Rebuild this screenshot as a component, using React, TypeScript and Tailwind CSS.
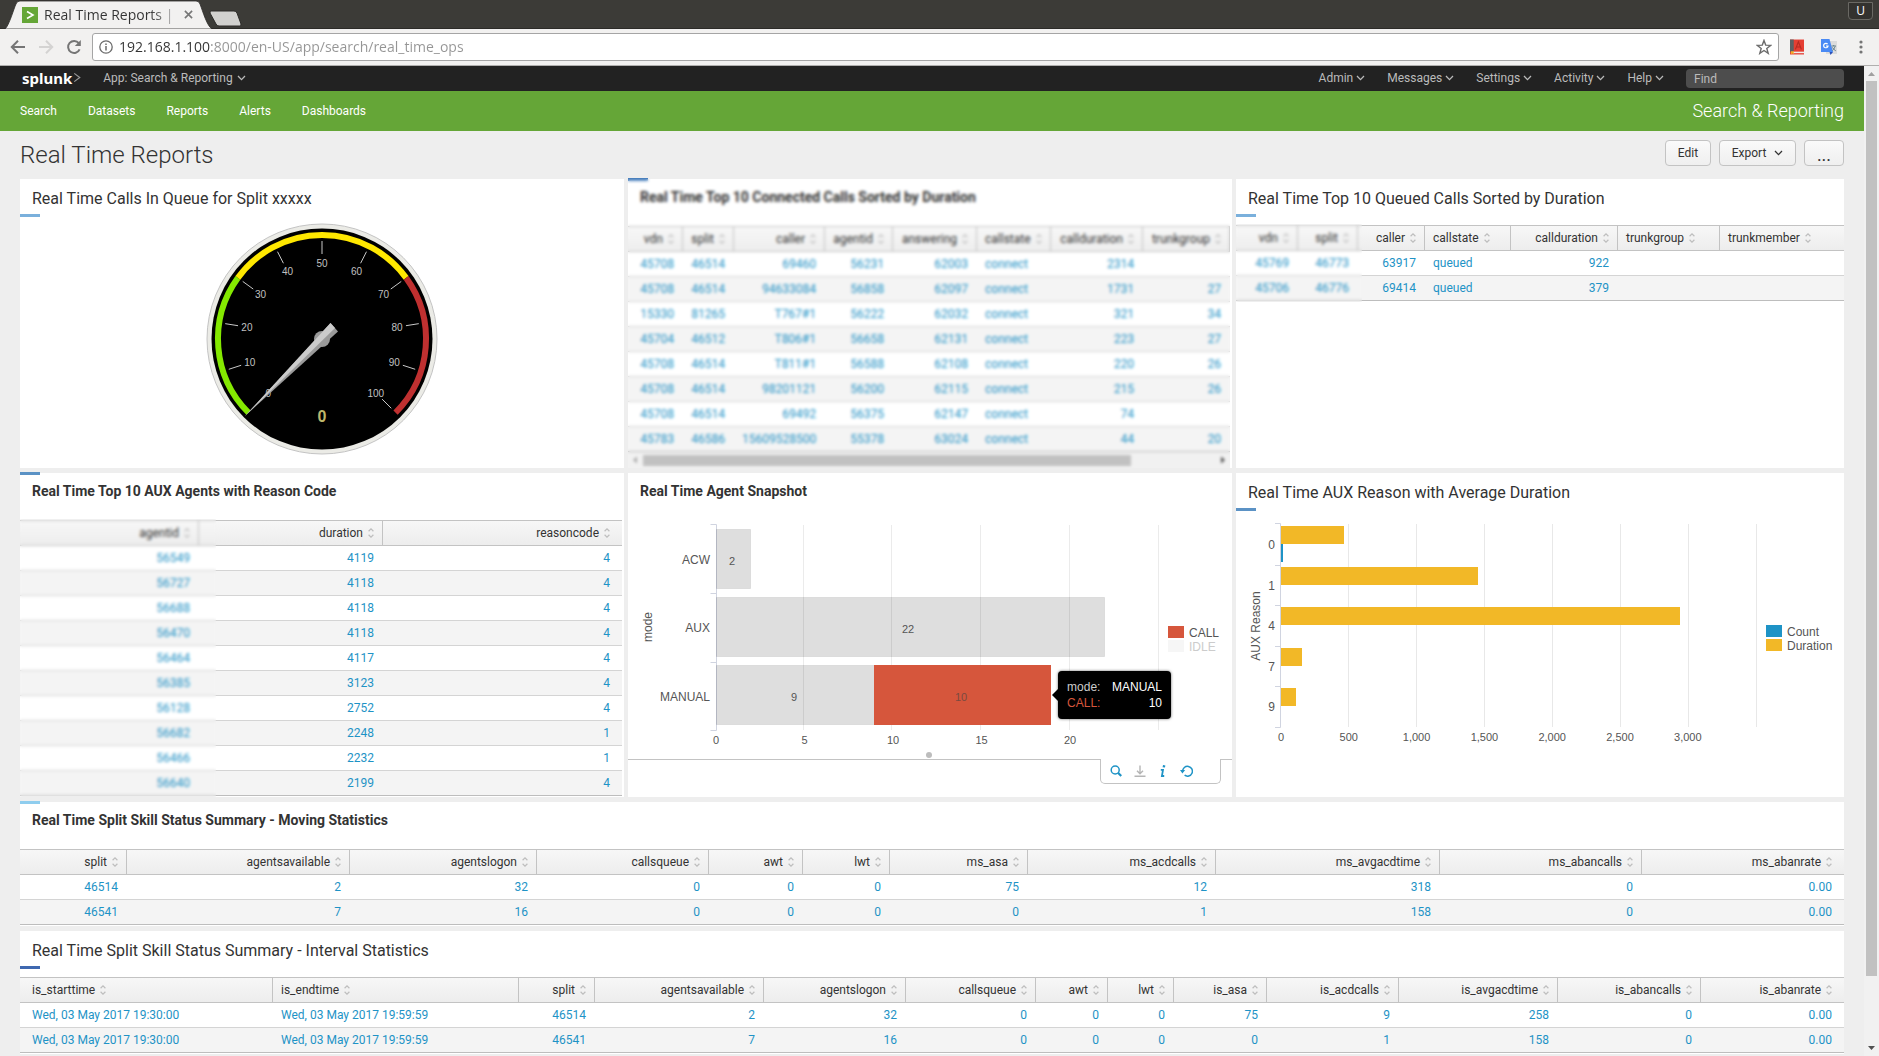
import type { ReactNode } from "react";

type Col = { name: string; w: string; left?: boolean };

const connectedCols: Col[] = [
  { name: "vdn", w: "w-[55px]" },
  { name: "split", w: "w-[51px]" },
  { name: "caller", w: "w-[91px]" },
  { name: "agentid", w: "w-[68px]" },
  { name: "answering", w: "w-[84px]" },
  { name: "callstate", w: "w-[74px]", left: true },
  { name: "callduration", w: "w-[92px]" },
  { name: "trunkgroup", w: "w-[87px]" },
];
const connectedRows = [
  ["45708", "46514", "69460", "56231", "62003", "connect", "2314", ""],
  ["45708", "46514", "94633084", "56858", "62097", "connect", "1731", "27"],
  ["15330", "81265", "T767#1", "56222", "62032", "connect", "321", "34"],
  ["45704", "46512", "T806#1", "56658", "62131", "connect", "223", "27"],
  ["45708", "46514", "T811#1", "56588", "62108", "connect", "220", "26"],
  ["45708", "46514", "98201121", "56200", "62115", "connect", "215", "26"],
  ["45708", "46514", "69492", "56375", "62147", "connect", "74", ""],
  ["45783", "46586", "15609528500", "55378", "63024", "connect", "44", "20"],
];

const queuedCols: Col[] = [
  { name: "vdn", w: "w-[62px]" },
  { name: "split", w: "w-[60px]" },
  { name: "caller", w: "w-[67px]" },
  { name: "callstate", w: "w-[86px]", left: true },
  { name: "callduration", w: "w-[107px]" },
  { name: "trunkgroup", w: "w-[102px]", left: true },
  { name: "trunkmember", w: "w-[124px]", left: true },
];
const queuedRows = [
  ["45769", "46773", "63917", "queued", "922", "", ""],
  ["45706", "46776", "69414", "queued", "379", "", ""],
];

const auxCols: Col[] = [
  { name: "agentid", w: "w-[179px]" },
  { name: "duration", w: "w-[184px]" },
  { name: "reasoncode", w: "w-[239px]" },
];
const auxRows = [
  ["56549", "4119", "4"],
  ["56727", "4118", "4"],
  ["56688", "4118", "4"],
  ["56470", "4118", "4"],
  ["56464", "4117", "4"],
  ["56385", "3123", "4"],
  ["56128", "2752", "4"],
  ["56682", "2248", "1"],
  ["56466", "2232", "1"],
  ["56640", "2199", "4"],
];

const movingCols: Col[] = [
  { name: "split", w: "w-[107px]" },
  { name: "agentsavailable", w: "w-[223px]" },
  { name: "agentslogon", w: "w-[187px]" },
  { name: "callsqueue", w: "w-[172px]" },
  { name: "awt", w: "w-[94px]" },
  { name: "lwt", w: "w-[87px]" },
  { name: "ms_asa", w: "w-[138px]" },
  { name: "ms_acdcalls", w: "w-[188px]" },
  { name: "ms_avgacdtime", w: "w-[224px]" },
  { name: "ms_abancalls", w: "w-[202px]" },
  { name: "ms_abanrate", w: "w-[202px]" },
];
const movingRows = [
  ["46514", "2", "32", "0", "0", "0", "75", "12", "318", "0", "0.00"],
  ["46541", "7", "16", "0", "0", "0", "0", "1", "158", "0", "0.00"],
];

const intervalCols: Col[] = [
  { name: "is_starttime", w: "w-[253px]", left: true },
  { name: "is_endtime", w: "w-[246px]", left: true },
  { name: "split", w: "w-[76px]" },
  { name: "agentsavailable", w: "w-[169px]" },
  { name: "agentslogon", w: "w-[142px]" },
  { name: "callsqueue", w: "w-[130px]" },
  { name: "awt", w: "w-[72px]" },
  { name: "lwt", w: "w-[66px]" },
  { name: "is_asa", w: "w-[93px]" },
  { name: "is_acdcalls", w: "w-[132px]" },
  { name: "is_avgacdtime", w: "w-[159px]" },
  { name: "is_abancalls", w: "w-[143px]" },
  { name: "is_abanrate", w: "w-[143px]" },
];
const intervalRows = [
  ["Wed, 03 May 2017 19:30:00", "Wed, 03 May 2017 19:59:59", "46514", "2", "32", "0", "0", "0", "75", "9", "258", "0", "0.00"],
  ["Wed, 03 May 2017 19:30:00", "Wed, 03 May 2017 19:59:59", "46541", "7", "16", "0", "0", "0", "0", "1", "158", "0", "0.00"],
];

function SortIcon() {
  return (
    <svg viewBox="0 0 6 10" className="h-[10px] w-[6px] shrink-0" fill="none" stroke="#bdbdbd" strokeWidth="1.2" aria-hidden="true">
      <path d="M0.6 3.2 L3 0.9 L5.4 3.2 M0.6 6.8 L3 9.1 L5.4 6.8" />
    </svg>
  );
}

function Chevron({ className = "" }: { className?: string }) {
  return (
    <svg viewBox="0 0 9 6" className={`h-[6px] w-[9px] shrink-0 ${className}`} fill="none" stroke="currentColor" strokeWidth="1.3" aria-hidden="true">
      <path d="M1 1 L4.5 4.6 L8 1" />
    </svg>
  );
}

function DataTable({ label, cols, rows, closed }: { label: string; cols: Col[]; rows: string[][]; closed?: boolean }) {
  const last = cols.length - 1;
  return (
    <table aria-label={label} className="w-full table-fixed border-separate border-spacing-0 text-xs">
      <colgroup>
        {cols.map((c) => (
          <col key={c.name} className={c.w} />
        ))}
      </colgroup>
      <thead>
        <tr>
          {cols.map((c, i) => (
            <th
              key={c.name}
              className={`h-[26px] border-y border-[#c3c3c3] bg-linear-to-b from-[#f7f7f7] to-[#ededed] p-0 font-normal text-[#333] ${
                i === last && !closed ? "pr-3" : "border-r pr-2"
              } ${i === 0 ? "pl-3" : "pl-2"}`}
            >
              <button type="button" className={`flex w-full items-center gap-[5px] ${c.left ? "justify-start" : "justify-end"}`}>
                {c.name}
                <SortIcon />
              </button>
            </th>
          ))}
        </tr>
      </thead>
      <tbody>
        {rows.map((r, ri) => (
          <tr key={ri} className={ri % 2 ? "bg-[#f4f4f4]" : "bg-white"}>
            {r.map((v, i) => (
              <td
                key={i}
                className={`h-[25px] border-b p-0 ${ri === rows.length - 1 ? "border-[#bdbdbd]" : "border-[#d4d4d4]"} ${
                  i === last && !closed ? "pr-3" : "pr-[9px]"
                } ${i === 0 ? "pl-3" : "pl-2"} ${cols[i].left ? "text-left" : "text-right"}`}
              >
                {v && (
                  <a href="#" className="whitespace-nowrap text-[#1e93c6]">
                    {v}
                  </a>
                )}
              </td>
            ))}
          </tr>
        ))}
      </tbody>
    </table>
  );
}

/* Panel whose progress mark sits under the title. */
function Panel({ title, mark, children, className = "" }: { title: string; mark: string; children: ReactNode; className?: string }) {
  return (
    <section className={`relative min-w-0 bg-white ${className}`}>
      <h2 className="h-[35px] pt-2 pl-3 text-base leading-6 text-[#333]">{title}</h2>
      <div className={`mb-2 h-[3px] w-5 ${mark}`} />
      {children}
    </section>
  );
}

/* Panel with a bold title and its progress mark on the top edge. */
function BoldPanel({ title, mark, children, className = "" }: { title: string; mark?: string; children: ReactNode; className?: string }) {
  return (
    <section className={`relative min-w-0 bg-white ${className}`}>
      {mark && <div className={`absolute -top-px left-0 h-[3px] w-5 ${mark}`} />}
      <h2 className="h-[47px] pt-[6px] pl-3 text-sm leading-6 font-bold text-[#333]">{title}</h2>
      {children}
    </section>
  );
}

const polar = (r: number, value: number): [number, number] => {
  const a = ((-135 + value * 2.7) * Math.PI) / 180;
  return [116 + r * Math.sin(a), 116 - r * Math.cos(a)];
};
const arc = (from: number, to: number) => {
  const [x1, y1] = polar(104, from);
  const [x2, y2] = polar(104, to);
  return `M${x1} ${y1} A104 104 0 0 1 ${x2} ${y2}`;
};

function Gauge() {
  const marks = [0, 10, 20, 30, 40, 50, 60, 70, 80, 90, 100];
  return (
    <svg viewBox="0 0 232 232" className="mx-auto -mt-0.5 block size-[232px]" role="img" aria-label="Calls in queue: 0">
      <circle cx="116" cy="116" r="115" fill="#ebebe6" stroke="#c4c4c4" />
      <circle cx="116" cy="116" r="110.5" fill="#000" />
      <g fill="none" strokeWidth="6">
        <path d={arc(0, 30)} stroke="#84e900" />
        <path d={arc(30, 70)} stroke="#ffe800" />
        <path d={arc(70, 100)} stroke="#bf3030" />
      </g>
      {marks.map((m) => {
        const [x1, y1] = polar(98, m);
        const [x2, y2] = polar(85, m);
        const [tx, ty] = polar(76, m);
        return (
          <g key={m}>
            <line x1={x1} y1={y1} x2={x2} y2={y2} stroke="#c8c8c8" />
            <text x={tx} y={ty + 4} textAnchor="middle" fontSize="10" fill="#c0c0c0" fontFamily="'Liberation Sans', sans-serif">
              {m}
            </text>
          </g>
        );
      })}
      <text x="116" y="199" textAnchor="middle" fontSize="16" fontWeight="bold" fill="#bdb76b" fontFamily="'Liberation Sans', sans-serif">
        0
      </text>
      <circle cx="116" cy="116" r="8" fill="#999" />
      <path d="M38.5 193.5 L124.5 100 L132 108.5 Z" fill="#9a9a9a" />
      <path d="M38.5 193.5 L124.5 100 L129 105 Z" fill="#cbcbcb" />
    </svg>
  );
}

function SnapshotChart() {
  return (
    <svg viewBox="0 0 604 239" className="block w-full" fontFamily="'Liberation Sans', sans-serif" fontSize="12" fill="#555">
      <g stroke="#ebebeb">
        {[176, 264, 353, 442, 531].map((x) => (
          <line key={x} x1={x - 0.5} x2={x - 0.5} y1="5" y2="210" />
        ))}
      </g>
      <path d="M82.5 4.5 H88.5 V210.5 H82.5 M82.5 73.5 H88 M82.5 142.5 H88" fill="none" stroke="#d0d4e0" />
      <g fill="#000" fillOpacity="0.13" stroke="#000" strokeOpacity="0.08">
        <rect x="88.5" y="9.5" width="34" height="59" />
        <rect x="88.5" y="77.5" width="388" height="59" />
        <rect x="88.5" y="145.5" width="158" height="59" />
      </g>
      <rect x="246" y="145" width="177" height="60" fill="#d6563c" />
      <g textAnchor="end">
        <text x="82" y="44">ACW</text>
        <text x="82" y="112">AUX</text>
        <text x="82" y="181">MANUAL</text>
      </g>
      <g textAnchor="middle" fontSize="11">
        <text x="104" y="45">2</text>
        <text x="280" y="113">22</text>
        <text x="166" y="181">9</text>
        <text x="333" y="181" fill="#7a4a40">10</text>
        {[0, 5, 10, 15, 20].map((v, i) => (
          <text key={v} x={88 + i * 88.5} y="224">{v}</text>
        ))}
      </g>
      <text transform="translate(24 107) rotate(-90)" textAnchor="middle">mode</text>
      <rect x="540" y="106" width="16" height="12" fill="#d6563c" />
      <text x="561" y="117">CALL</text>
      <rect x="540" y="120" width="16" height="12" fill="#f6f6f6" />
      <text x="561" y="131" fill="#ccc">IDLE</text>
      <circle cx="301" cy="235" r="3" fill="#bdbdbd" />
    </svg>
  );
}

function AuxChart() {
  const bars = [
    { label: "0", y: 7, w: 63 },
    { label: "1", y: 48, w: 197 },
    { label: "4", y: 88, w: 399 },
    { label: "7", y: 129, w: 21 },
    { label: "9", y: 169, w: 15 },
  ];
  return (
    <svg viewBox="0 0 608 240" className="block w-full" fontFamily="'Liberation Sans', sans-serif" fontSize="12" fill="#555">
      <g stroke="#e8e8e8">
        {[112, 180, 248, 316, 384, 452, 520].map((x) => (
          <line key={x} x1={x + 0.5} x2={x + 0.5} y1="5" y2="208" />
        ))}
      </g>
      <path d="M39 4.5 H44.5 V208.5 H39 M39 46.5 H44 M39 86.5 H44 M39 127.5 H44 M39 167.5 H44" fill="none" stroke="#d0d4e0" />
      {bars.map((b) => (
        <g key={b.label}>
          <rect x="45" y={b.y} width={b.w} height="18" fill="#f2b827" />
          <text x="39" y={b.y + 23} textAnchor="end">{b.label}</text>
        </g>
      ))}
      <rect x="45" y="25" width="2" height="18" fill="#1e93c6" />
      <g textAnchor="middle" fontSize="11">
        {["0", "500", "1,000", "1,500", "2,000", "2,500", "3,000"].map((t, i) => (
          <text key={t} x={45 + i * 67.8} y="222">{t}</text>
        ))}
      </g>
      <text transform="translate(24 107) rotate(-90)" textAnchor="middle">AUX Reason</text>
      <rect x="530" y="106" width="16" height="12" fill="#1e93c6" />
      <text x="551" y="117">Count</text>
      <rect x="530" y="120" width="16" height="12" fill="#f2b827" />
      <text x="551" y="131">Duration</text>
    </svg>
  );
}

function BrowserChrome() {
  return (
    <header className="shrink-0 font-['Open_Sans',sans-serif]">
      <div className="flex h-[29px] items-start justify-between border-b border-[#2c2b28] bg-[#3c3b37]">
        <div className="flex">
          <div className="relative h-[29px] w-[214px]">
            <svg viewBox="0 0 214 29" className="absolute inset-0 h-[29px] w-[214px]" aria-hidden="true">
              <path d="M5 29 C9 26 14 8 16 4 Q17 1 20 1 H196 Q199 1 200 4 C203 12 207 26 212 29 Z" fill="#f2f1f0" stroke="#2c2b28" strokeWidth="0.8" />
            </svg>
            <div className="relative flex h-[29px] items-center pl-[22px]">
              <svg viewBox="0 0 16 16" className="size-4" aria-hidden="true">
                <rect width="16" height="16" fill="#65a637" />
                <path d="M5 4.5 L11 8 L5 11.5" fill="none" stroke="#fff" strokeWidth="1.6" />
              </svg>
              <span className="ml-[6px] w-[131px] overflow-hidden bg-linear-to-r from-[#333] from-80% to-[#bbb] bg-clip-text text-sm whitespace-nowrap text-transparent">
                Real Time Reports |
              </span>
              <button type="button" aria-label="Close tab" className="ml-[9px]">
                <svg viewBox="0 0 10 10" className="size-[9px]" stroke="#777" strokeWidth="1.8">
                  <path d="M1 1 L9 9 M9 1 L1 9" />
                </svg>
              </button>
            </div>
          </div>
          <button type="button" aria-label="New tab" className="-ml-[5px] pt-[7px]">
            <svg viewBox="0 0 34 17" className="block h-[17px] w-[34px]">
              <path d="M2 1 H25 Q27 1 28 3 L32 14 Q32 16 31 16 H10 Q8 16 7 14 L1 3 Q1 1 2 1 Z" fill="#d1d0ce" stroke="#2c2b28" />
            </svg>
          </button>
        </div>
        <button type="button" className="mt-0.5 mr-[6px] h-[18px] w-[25px] rounded-b border border-[#6a6964] bg-[#33322f] text-xs leading-4 text-white">
          U
        </button>
      </div>
      <div className="flex h-[37px] items-center border-b border-[#b0afae] bg-[#f2f1f0] text-[#757575]">
        <button type="button" aria-label="Back" className="ml-[10px]">
          <svg viewBox="0 0 16 16" className="size-4" fill="none" stroke="#757575" strokeWidth="2">
            <path d="M15 8 H2 M8 1.8 L1.8 8 L8 14.2" />
          </svg>
        </button>
        <button type="button" aria-label="Forward" className="ml-3">
          <svg viewBox="0 0 16 16" className="size-4" fill="none" stroke="#d4d3d2" strokeWidth="2">
            <path d="M1 8 H14 M8 1.8 L14.2 8 L8 14.2" />
          </svg>
        </button>
        <button type="button" aria-label="Reload" className="ml-3">
          <svg viewBox="0 0 16 16" className="size-4" fill="none" stroke="#757575" strokeWidth="2">
            <path d="M13.6 10.4 A6 6 0 1 1 12.8 4.2" />
            <path d="M14.8 1 V7 H8.8 Z" fill="#757575" stroke="none" />
          </svg>
        </button>
        <div className="ml-[10px] flex h-[28px] min-w-0 flex-1 items-center rounded-[3px] border border-[#a5a5a5] bg-white px-[6px]">
          <svg viewBox="0 0 14 14" className="size-[14px] shrink-0" fill="none" stroke="#6b6b6b" strokeWidth="1.3" aria-hidden="true">
            <circle cx="7" cy="7" r="6.2" />
            <path d="M7 6 V10.4 M7 3.4 V5" strokeWidth="1.5" />
          </svg>
          <input
            aria-label="Address"
            defaultValue="192.168.1.100:8000/en-US/app/search/real_time_ops"
            className="ml-[6px] min-w-0 flex-1 bg-linear-to-r from-[#333] from-[91px] to-[#959595] to-[91px] bg-clip-text text-sm text-transparent outline-none"
          />
          <button type="button" aria-label="Bookmark">
            <svg viewBox="0 0 16 16" className="size-4" fill="none" stroke="#6b6b6b" strokeWidth="1.4">
              <path d="M8 1.4 L9.7 6.1 L14.8 6.3 L10.8 9.4 L12.2 14.3 L8 11.5 L3.8 14.3 L5.2 9.4 L1.2 6.3 L6.3 6.1 Z" />
            </svg>
          </button>
        </div>
        <button type="button" aria-label="Dictionary" className="ml-[11px]">
          <svg viewBox="0 0 15 16" className="h-4 w-[14px]">
            <rect width="15" height="16" fill="#e53f33" />
            <rect width="4" height="13" fill="#5d6265" />
            <path d="M5.8 10.5 L9 2.5 L12.2 10.5 M7 8 H11" fill="none" stroke="#b52b22" strokeWidth="1.2" />
            <rect x="3" y="13" width="12" height="1.6" fill="#eee" />
            <path d="M1 12.5 H4 V16 L2.5 14.6 L1 16 Z" fill="#f5b324" />
          </svg>
        </button>
        <button type="button" aria-label="Translate" className="ml-[17px]">
          <svg viewBox="0 0 16 16" className="size-4">
            <rect x="5" y="2" width="11" height="13" fill="#dcdcdc" />
            <path d="M0 0 H8.5 L12 13 H0 Z" fill="#4a8af4" />
            <path d="M8.5 13 H12 L9.5 16 Z" fill="#2a50b8" />
            <path d="M6.6 5.2 A2.2 2.2 0 1 0 7 7 H5" fill="none" stroke="#fff" strokeWidth="1.2" />
            <path d="M10.5 7 H15 M12.7 6 V7 M14.2 7.4 Q13 10.5 11.2 11.6 M11.4 8.4 Q12.6 10.6 14.8 11.8" fill="none" stroke="#5c7a86" strokeWidth="0.9" />
          </svg>
        </button>
        <button type="button" aria-label="Menu" className="mr-4 ml-[22px]">
          <svg viewBox="0 0 4 14" className="h-[14px] w-1" fill="#757575">
            <circle cx="2" cy="2" r="1.6" />
            <circle cx="2" cy="7" r="1.6" />
            <circle cx="2" cy="12" r="1.6" />
          </svg>
        </button>
      </div>
    </header>
  );
}

function TopBar() {
  return (
    <div className="flex h-[25px] items-center bg-[#222] pr-5 pb-0.5 pl-[22px] text-xs text-[#bbb]">
      <a href="#" className="flex items-center font-['Noto_Sans',sans-serif] text-[15px] leading-5 font-bold text-white">
        splunk
        <svg viewBox="0 0 8 12" className="ml-px h-[11px] w-2" fill="none" stroke="#999" strokeWidth="1.3" aria-hidden="true">
          <path d="M1 1.5 L7 6 L1 10.5" />
        </svg>
      </a>
      <button type="button" className="ml-[22px] flex items-center gap-1">
        App: Search &amp; Reporting <Chevron />
      </button>
      <nav className="ml-auto flex items-center gap-[22px]">
        {["Admin", "Messages", "Settings", "Activity", "Help"].map((t) => (
          <button key={t} type="button" className="flex items-center gap-[3px]">
            {t} <Chevron />
          </button>
        ))}
      </nav>
      <input
        aria-label="Find"
        placeholder="Find"
        className="mt-0.5 ml-[22px] h-[19px] w-[158px] rounded bg-[#4d4d4d] px-2 text-xs text-white placeholder:text-[#bbb]"
      />
    </div>
  );
}

function TrayIcons() {
  return (
    <div className="flex h-[25px]">
      <div className="flex-1 border-t border-[#c3c3c3]" />
      <div className="flex w-[121px] items-center gap-3 rounded-b-[5px] border border-t-0 border-[#c3c3c3] pl-[9px]">
        <button type="button" aria-label="Open in search">
          <svg viewBox="0 0 12 12" className="block size-3" fill="none" stroke="#1e93c6" strokeWidth="1.5">
            <circle cx="5.2" cy="5" r="4" />
            <path d="M8 7.8 L11.2 11" strokeWidth="2.2" />
          </svg>
        </button>
        <button type="button" aria-label="Export">
          <svg viewBox="0 0 12 12" className="block size-3" fill="none" stroke="#b5b5b5" strokeWidth="1.4">
            <path d="M6 0.5 V8.5 M3 5.8 L6 8.8 L9 5.8 M0.5 11.2 H11.5" />
          </svg>
        </button>
        <button type="button" aria-label="Inspect">
          <svg viewBox="0 0 10 12" className="block h-3 w-[10px]" fill="none" stroke="#1e93c6">
            <path d="M6.2 0.2 L5.8 2.4" strokeWidth="2.4" />
            <path d="M2.8 4.8 H5 L3.9 11 H6.2" strokeWidth="1.8" />
          </svg>
        </button>
        <button type="button" aria-label="Refresh">
          <svg viewBox="0 0 13 12" className="block h-3 w-[13px]" fill="none" stroke="#1e93c6" strokeWidth="1.5">
            <path d="M2.6 6.4 A4.9 4.9 0 1 1 4.6 10.2" />
            <path d="M0 5 H5.2 L2.4 8.4 Z" fill="#1e93c6" stroke="none" />
          </svg>
        </button>
      </div>
      <div className="w-[11px] border-t border-[#c3c3c3]" />
    </div>
  );
}

const btn = "flex h-[26px] items-center justify-center rounded border border-[#c3c3c3] bg-linear-to-b from-[#fafafa] to-[#efefef] text-xs text-[#333]";

export default function App() {
  return (
    <div className="flex h-screen flex-col overflow-hidden bg-[#eee] font-[Roboto,sans-serif]">
      <BrowserChrome />
      <div className="flex min-h-0 flex-1">
        <div className="min-w-0 flex-1 overflow-hidden">
          <TopBar />
          <nav className="flex h-10 items-center gap-[31px] bg-[#65a637] px-5 text-xs text-white">
            {["Search", "Datasets", "Reports", "Alerts", "Dashboards"].map((t) => (
              <a key={t} href="#">
                {t}
              </a>
            ))}
            <a href="#" className="ml-auto text-lg font-light">
              Search &amp; Reporting
            </a>
          </nav>
          <div className="flex h-12 items-center justify-between px-5">
            <h1 className="text-2xl font-light text-[#333]">Real Time Reports</h1>
            <div className="flex gap-2 pb-1">
              <button type="button" className={`${btn} w-[46px]`}>
                Edit
              </button>
              <button type="button" className={`${btn} w-[77px] gap-2`}>
                Export <Chevron />
              </button>
              <button type="button" aria-label="More actions" className={`${btn} w-10 pt-1`}>
                <span className="text-lg leading-4">...</span>
              </button>
            </div>
          </div>

          <main className="grid grid-cols-[604fr_604fr_608fr] gap-x-1 gap-y-[5px] px-5">
            <Panel title="Real Time Calls In Queue for Split xxxxx" mark="bg-[#7ab0dc]" className="min-h-[289px]">
              <Gauge />
            </Panel>

            <BoldPanel title="Real Time Top 10 Connected Calls Sorted by Duration" mark="bg-[#4a80bd]">
              <div className="mr-0.5">
                <DataTable label="Connected calls" cols={connectedCols} rows={connectedRows} closed />
              </div>
              <div className="mr-0.5 flex h-4 items-center bg-[#f1f1f1]">
                <svg viewBox="0 0 15 10" className="h-[10px] w-[15px]" fill="#aaa" aria-hidden="true">
                  <path d="M9 1.5 V8.5 L5 5 Z" />
                </svg>
                <div className="h-[11px] w-[488px] bg-[#c1c1c1]" />
                <svg viewBox="0 0 15 10" className="ml-auto h-[10px] w-[15px]" fill="#505050" aria-hidden="true">
                  <path d="M6 1.5 V8.5 L10 5 Z" />
                </svg>
              </div>
              <div className="absolute inset-y-0 right-0.5 left-0 backdrop-blur-[1.5px]" />
            </BoldPanel>

            <Panel title="Real Time Top 10 Queued Calls Sorted by Duration" mark="bg-[#7ab0dc]">
              <div className="relative">
                <DataTable label="Queued calls" cols={queuedCols} rows={queuedRows} />
                <div className="absolute -top-px -bottom-px left-0 w-[126px] backdrop-blur-[1.5px]" />
              </div>
            </Panel>

            <BoldPanel title="Real Time Top 10 AUX Agents with Reason Code" mark="bg-[#5b92c5]" className="min-h-[324px]">
              <div className="relative mr-0.5">
                <DataTable label="AUX agents" cols={auxCols} rows={auxRows} />
                <div className="absolute -top-px -bottom-px left-0 w-[196px] backdrop-blur-[1.5px]" />
              </div>
            </BoldPanel>

            <BoldPanel title="Real Time Agent Snapshot">
              <div className="relative">
                <SnapshotChart />
                <div className="absolute top-[151px] left-[71.2%] flex h-12 w-[113px] flex-col justify-center rounded-sm bg-black px-[9px] font-['Liberation_Sans',sans-serif] text-xs leading-4 text-white shadow-[0_0_3px_rgba(0,0,0,0.6)]">
                  <svg viewBox="0 0 6 12" className="absolute top-[18px] -left-[6px] h-3 w-[6px]" aria-hidden="true">
                    <path d="M6 0 V12 L0 6 Z" />
                  </svg>
                  <div className="flex justify-between">
                    <span className="text-[#ccc]">mode:</span>
                    <span>MANUAL</span>
                  </div>
                  <div className="flex justify-between">
                    <span className="text-[#d6563c]">CALL:</span>
                    <span>10</span>
                  </div>
                </div>
              </div>
              <TrayIcons />
            </BoldPanel>

            <Panel title="Real Time AUX Reason with Average Duration" mark="bg-[#5b92c5]">
              <AuxChart />
            </Panel>

            <BoldPanel title="Real Time Split Skill Status Summary - Moving Statistics" mark="bg-[#8fcdee]" className="col-span-3 pb-px">
              <DataTable label="Moving statistics" cols={movingCols} rows={movingRows} />
            </BoldPanel>

            <Panel title="Real Time Split Skill Status Summary - Interval Statistics" mark="bg-[#3f68b0]" className="col-span-3 pb-px">
              <DataTable label="Interval statistics" cols={intervalCols} rows={intervalRows} />
            </Panel>
          </main>
        </div>

        <div className="flex w-[15px] shrink-0 flex-col items-center bg-[#f1f1f1]" aria-hidden="true">
          <svg viewBox="0 0 15 15" className="size-[15px]" fill="#a0a0a0">
            <path d="M4 10 H11 L7.5 6 Z" />
          </svg>
          <div className="w-[11px] grow-[895] bg-[#c1c1c1]" />
          <div className="grow-[65]" />
          <svg viewBox="0 0 15 15" className="size-[15px]" fill="#505050">
            <path d="M4 5 H11 L7.5 9 Z" />
          </svg>
        </div>
      </div>
    </div>
  );
}
